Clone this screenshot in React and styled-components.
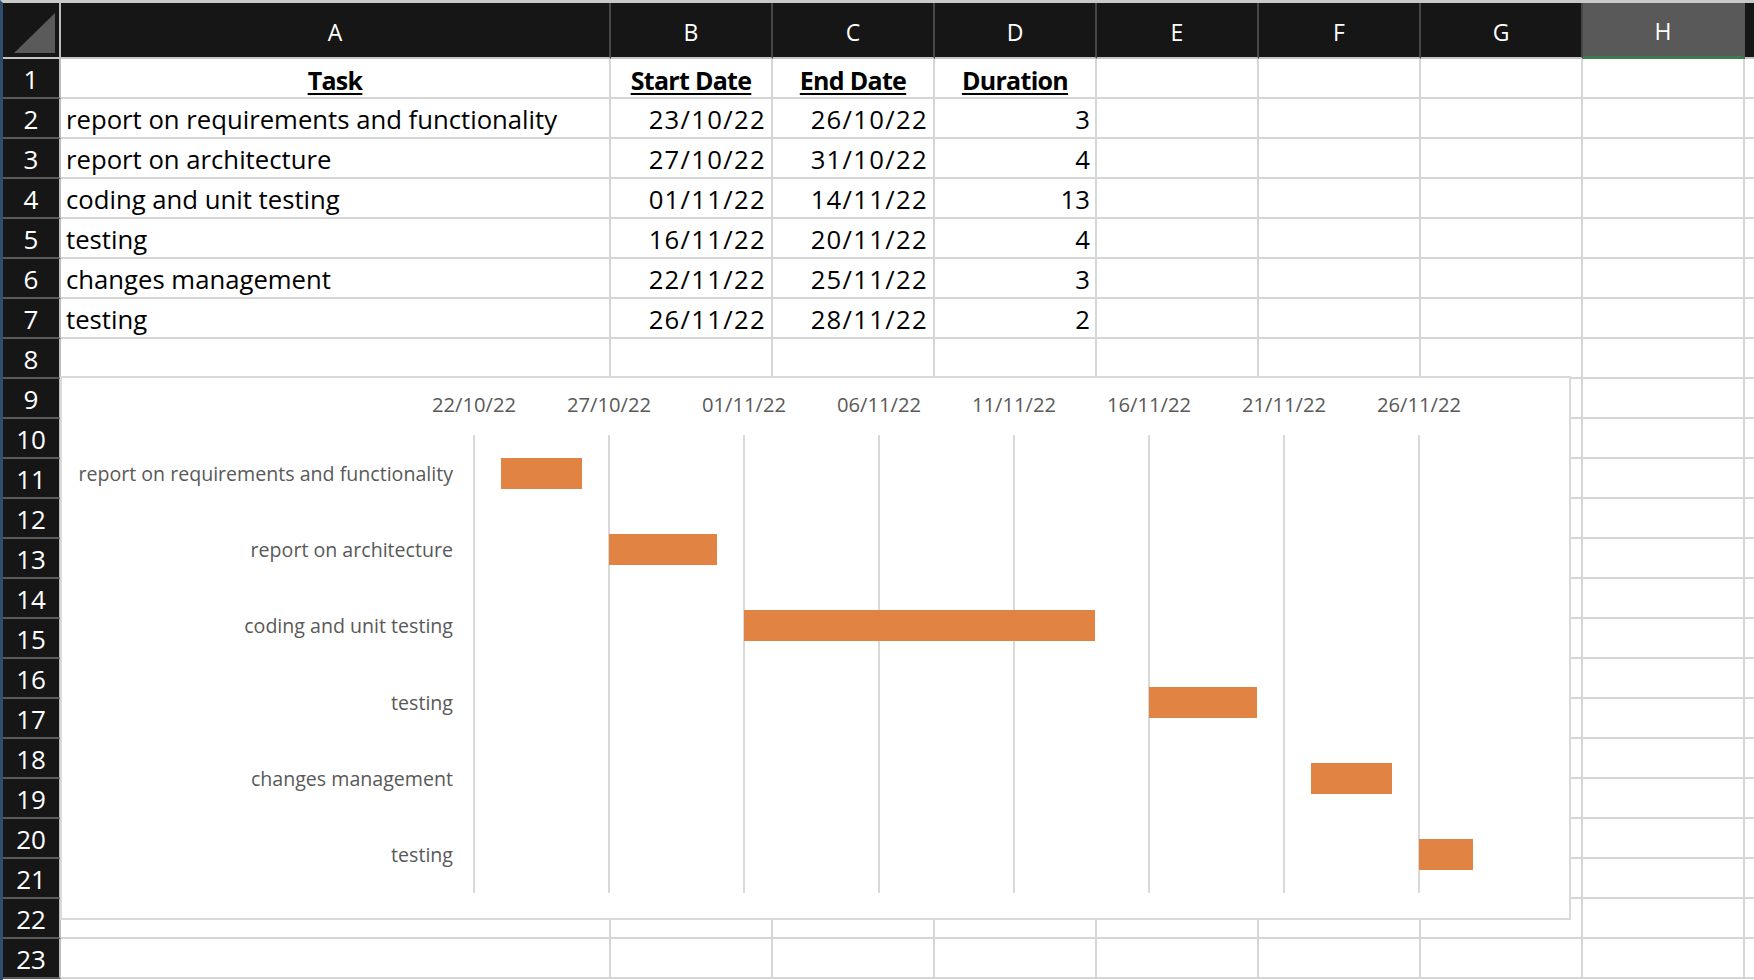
import React from "react";
import styled, { createGlobalStyle } from "styled-components";

const FONT = `"Open Sans", "Noto Sans", "DejaVu Sans", sans-serif`;

const GlobalStyle = createGlobalStyle`
  html, body { margin: 0; padding: 0; background: #ffffff; }
  body { font-family: ${FONT}; }
  *, *::before, *::after { box-sizing: border-box; }
`;

const Window = styled.div`
  position: relative;
  width: 1754px;
  height: 980px;
  overflow: hidden;
  background: #ffffff;
  border-top: 3px solid #c9c9c9;
  border-left: 3px solid #2f4e6f;
  font-family: ${FONT};
`;

const Sheet = styled.div`
  display: grid;
  grid-template-columns: 58px 550px repeat(8, 162px);
  grid-template-rows: 56px;
  grid-auto-rows: 40px;
`;

const CornerCell = styled.div`
  position: relative;
  background: #161616;
  border-right: 2px solid #bdbdbd;
  border-bottom: 2px solid #c6c6c6;
  &::after {
    content: "";
    position: absolute;
    left: 11px;
    top: 10px;
    width: 41px;
    height: 40px;
    background: #5a5a5a;
    clip-path: polygon(100% 0, 100% 100%, 0 100%);
  }
`;

const ColumnHeader = styled.div`
  display: flex;
  align-items: center;
  justify-content: center;
  padding-top: 3px;
  background: ${(p) => (p.$active ? "#595959" : "#161616")};
  color: #ffffff;
  font-size: 23px;
  border-right: 2px solid ${(p) => (p.$active ? "#595959" : "#474747")};
  border-bottom: ${(p) => (p.$active ? "3px solid #3e7b4e" : "2px solid #c6c6c6")};
`;

const RowHeader = styled.div`
  display: flex;
  align-items: center;
  justify-content: center;
  padding-top: 1px;
  background: #161616;
  color: #ffffff;
  font-size: 26px;
  border-right: 2px solid #bdbdbd;
  border-bottom: 2px solid #5a5a5a;
`;

const Cell = styled.div`
  border-right: 2px solid #d6d6d6;
  border-bottom: 2px solid #d6d6d6;
  font-size: ${(p) => (p.$bold ? "25px" : "25.7px")};
  line-height: 38px;
  padding: 2px 5px 0 5px;
  white-space: nowrap;
  overflow: hidden;
  color: #000000;
  text-align: ${(p) => p.$align || "left"};
  font-weight: ${(p) => (p.$bold ? 700 : 400)};
  letter-spacing: ${(p) => (p.$numeric ? "1.3px" : p.$bold ? "-0.7px" : "0")};
`;

const Underlined = styled.span`
  text-decoration: underline;
  text-decoration-thickness: 2px;
  text-underline-offset: 3px;
`;

const Chart = styled.div`
  position: absolute;
  left: 57px;
  top: 373px;
  width: 1511px;
  height: 544px;
  background: #ffffff;
  border: 2px solid #d9d9d9;
  font-family: ${FONT};
  color: #595959;
`;

const ChartBody = styled.div`
  display: grid;
  grid-template-columns: 411px 1fr;
  grid-template-rows: 57px 458px;
`;

const AxisRow = styled.div`
  display: flex;
  align-items: center;
  padding-bottom: 5px;
  margin-left: -66.5px;
`;

const AxisLabel = styled.div`
  flex: 0 0 135px;
  text-align: center;
  font-size: 20.2px;
`;

const CategoryColumn = styled.div`
  display: flex;
  flex-direction: column;
  padding-right: 20px;
`;

const CategoryLabel = styled.div`
  flex: 1;
  display: flex;
  align-items: center;
  justify-content: flex-end;
  font-size: 19.6px;
  white-space: nowrap;
`;

const Plot = styled.div`
  display: flex;
  flex-direction: column;
  background-image: repeating-linear-gradient(
    to right,
    #d9d9d9 0,
    #d9d9d9 2px,
    transparent 2px,
    transparent 135px
  );
  background-size: 947px 100%;
  background-repeat: no-repeat;
`;

const BarRow = styled.div`
  flex: 1;
  display: flex;
  align-items: center;
`;

const Bar = styled.div`
  height: 31px;
  background: #e08343;
  flex-shrink: 0;
`;

const DAY = 27;

const tasks = [
  { name: "report on requirements and functionality", start: "23/10/22", end: "26/10/22", dur: 3, offset: 1 },
  { name: "report on architecture", start: "27/10/22", end: "31/10/22", dur: 4, offset: 5 },
  { name: "coding and unit testing", start: "01/11/22", end: "14/11/22", dur: 13, offset: 10 },
  { name: "testing", start: "16/11/22", end: "20/11/22", dur: 4, offset: 25 },
  { name: "changes management", start: "22/11/22", end: "25/11/22", dur: 3, offset: 31 },
  { name: "testing", start: "26/11/22", end: "28/11/22", dur: 2, offset: 35 },
];

const axisDates = ["22/10/22", "27/10/22", "01/11/22", "06/11/22", "11/11/22", "16/11/22", "21/11/22", "26/11/22"];

// Column I is only a sliver at the right edge; its letter is out of view.
const columns = ["A", "B", "C", "D", "E", "F", "G", "H", ""];
const EXTRA = 5; // E..I empty

export default function App() {
  const rows = [];
  for (let r = 1; r <= 23; r++) {
    let cells;
    if (r === 1) {
      cells = [
        <Cell key="a" $align="center" $bold><Underlined>Task</Underlined></Cell>,
        <Cell key="b" $align="center" $bold><Underlined>Start Date</Underlined></Cell>,
        <Cell key="c" $align="center" $bold><Underlined>End Date</Underlined></Cell>,
        <Cell key="d" $align="center" $bold><Underlined>Duration</Underlined></Cell>,
      ];
    } else if (r <= 7) {
      const t = tasks[r - 2];
      cells = [
        <Cell key="a">{t.name}</Cell>,
        <Cell key="b" $align="right" $numeric>{t.start}</Cell>,
        <Cell key="c" $align="right" $numeric>{t.end}</Cell>,
        <Cell key="d" $align="right">{t.dur}</Cell>,
      ];
    } else {
      cells = [<Cell key="a" />, <Cell key="b" />, <Cell key="c" />, <Cell key="d" />];
    }
    for (let i = 0; i < EXTRA; i++) cells.push(<Cell key={`x${i}`} />);
    rows.push(
      <React.Fragment key={r}>
        <RowHeader>{r}</RowHeader>
        {cells}
      </React.Fragment>
    );
  }

  return (
    <>
      <GlobalStyle />
      <Window>
        <Sheet>
          <CornerCell />
          {columns.map((c, i) => (
            <ColumnHeader key={i} $active={c === "H"}>{c}</ColumnHeader>
          ))}
          {rows}
        </Sheet>
        <Chart>
          <ChartBody>
            <div />
            <AxisRow>
              {axisDates.map((d) => (
                <AxisLabel key={d}>{d}</AxisLabel>
              ))}
            </AxisRow>
            <CategoryColumn>
              {tasks.map((t, i) => (
                <CategoryLabel key={i}>{t.name}</CategoryLabel>
              ))}
            </CategoryColumn>
            <Plot>
              {tasks.map((t, i) => (
                <BarRow key={i}>
                  <Bar style={{ marginLeft: 1 + t.offset * DAY, width: t.dur * DAY }} />
                </BarRow>
              ))}
            </Plot>
          </ChartBody>
        </Chart>
      </Window>
    </>
  );
}
